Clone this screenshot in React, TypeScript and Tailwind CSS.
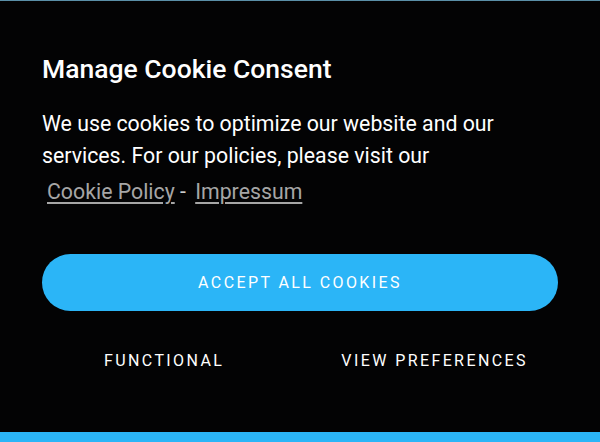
import React from 'react';

export default function App() {
  return (
    <div className="w-[600px] h-[442px] bg-[#030304] flex flex-col font-['Roboto',sans-serif] overflow-hidden">
      <div className="h-px bg-[#5a8fa8]" />
      <div className="flex-1 px-[42px] pt-[51px]">
        <h1 className="text-[26.5px] leading-[34px] font-medium text-white">Manage Cookie Consent</h1>
        <p className="mt-[22px] max-w-[490px] text-[21.3px] leading-[32px] text-white">
          We use cookies to optimize our website and our services. For our policies, please visit our
        </p>
        <div className="mt-[4px] text-[21.3px] leading-[32px] text-white">
          <a href="#" className="ml-[5px] text-[#a6a6a6] underline underline-offset-[3px]">Cookie Policy</a>
          <span className="text-[#cccccc]"> - </span>
          <a href="#" className="ml-[4px] text-[#a6a6a6] underline underline-offset-[3px]">Impressum</a>
        </div>
        <button className="mt-[46px] w-full h-[57px] rounded-full bg-[#2bb5f7] text-white text-[16px] tracking-[2.4px] uppercase">
          Accept all cookies
        </button>
        <div className="mt-[38px] flex items-center pl-[62px] gap-[117px]">
          <button className="text-white text-[16px] tracking-[2.4px] uppercase">Functional</button>
          <button className="text-white text-[16px] tracking-[2.4px] uppercase">View preferences</button>
        </div>
      </div>
      <div className="h-[10px] bg-[#2bb5f7]" />
    </div>
  );
}
